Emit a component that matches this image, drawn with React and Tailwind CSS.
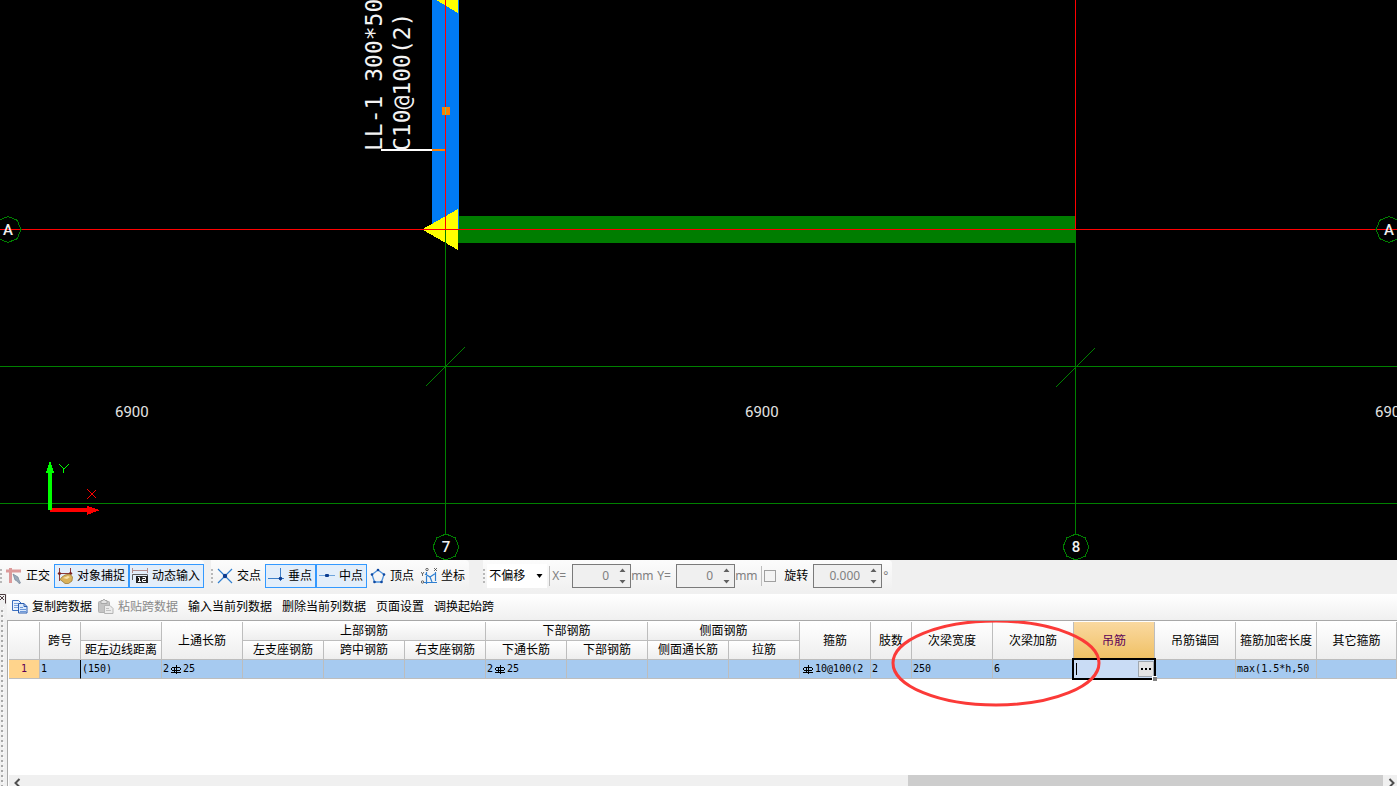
import React, { useState } from 'react'

const CopyIcon = () => (
  <svg width="16" height="16" viewBox="0 0 16 16" className="shrink-0">
    <path d="M0.5 1.5h6l3 3v7h-9z" fill="#e8f1fd" stroke="#3c6fc0" />
    <path d="M2 4.5h4M2 6.5h4M2 8.5h4" stroke="#7da4de" />
    <path d="M6.5 4.5h5.5l3 3v6.5h-8.5z" fill="#dbe9fc" stroke="#2a5db0" />
    <path d="M12 4.5v3h3" fill="none" stroke="#2a5db0" />
    <path d="M8 8.5h3M8 10.5h6M8 12.5h6" stroke="#6a96d8" />
  </svg>
)

const PasteIcon = () => (
  <svg width="16" height="16" viewBox="0 0 16 16" className="shrink-0">
    <rect x="0.5" y="2.5" width="11" height="11" rx="1" fill="#c4c4c4" stroke="#b0b0b0" />
    <path d="M3 1.5h2l1-1.5 1 1.5h2v3H3z" fill="#e4e4e4" stroke="#a8a8a8" />
    <path d="M6.5 6.5h5.5l3 3v5h-8.5z" fill="#ececec" stroke="#b4b4b4" />
    <path d="M8 9.5h3M8 11.5h5" stroke="#c0c0c0" />
  </svg>
)

const OrthoIcon = () => (
  <svg width="16" height="16" viewBox="0 0 16 16" className="shrink-0">
    <path d="M0 3h15M4.5 0v15" stroke="#dc9a9a" strokeWidth="3" />
    <path d="M7 6l5 3 1 3 1.500 3-1.500 0.500-2-2.500-2-1z" fill="#9aa8b8" stroke="#6c7c90" strokeWidth="0.600" />
  </svg>
)

const SnapIcon = () => (
  <svg width="16" height="16" viewBox="0 0 16 16" className="shrink-0">
    <path d="M2.5 0v13M13.5 0v7M1 5.5h14" stroke="#8c3a3a" />
    <path d="M0.5 5.5l2-2 2 2-2 2zM11.5 5.5l2-2 2 2-2 2z" fill="#7a2020" />
    <path d="M5 9l3-2 5-1 2.500 3-0.500 4-3.500 2.500H8l-3-2.500-2-1.500z" fill="#d9b25c" stroke="#94702a" strokeWidth="0.7" />
    <path d="M6 10l5-2 2 1-3 2z" fill="#f6e3ad" />
  </svg>
)

const DynamicIcon = () => (
  <svg width="16" height="16" viewBox="0 0 16 16" className="shrink-0">
    <path d="M0.5 0v5M15.5 0v5M1 2.5h14" stroke="#b08c8c" fill="none" />
    <path d="M0.5 12V6.5h15V9" fill="none" stroke="#5c5c5c" />
    <path d="M4 8h12v7H4z" fill="#222" />
    <path d="M6 9.500h1.500v4M6 13.500h3M10.500 9.500h3v2h-3v2h3.500" fill="none" stroke="#fff" />
  </svg>
)

const CrossIcon = () => (
  <svg width="16" height="16" viewBox="0 0 16 16" className="shrink-0">
    <path d="M1 1l14 14M15 1L1 15" stroke="#2f7fd0" strokeWidth="1.200" />
    <circle cx="8" cy="8" r="2.200" fill="#0c3c90" />
  </svg>
)

const PerpIcon = () => (
  <svg width="16" height="16" viewBox="0 0 16 16" className="shrink-0">
    <path d="M0 10.500h16M12.500 0v13" stroke="#3d7fc8" />
    <circle cx="12.500" cy="10.500" r="1.800" fill="#0c3c90" />
  </svg>
)

const MidIcon = () => (
  <svg width="16" height="16" viewBox="0 0 16 16" className="shrink-0">
    <path d="M0 7.500h16" stroke="#6ea4dc" />
    <rect x="6" y="6" width="4" height="3" rx="1" fill="#0c3c90" />
  </svg>
)

const VertexIcon = () => (
  <svg width="16" height="16" viewBox="0 0 16 16" className="shrink-0">
    <path d="M8 2l6 4.500-2.500 7.500h-7L2 6.500z" fill="none" stroke="#4f92dc" strokeWidth="1.300" />
    <g fill="#0f48a0">
      <circle cx="8" cy="2" r="1.300" />
      <circle cx="14" cy="6.500" r="1.300" />
      <circle cx="2" cy="6.500" r="1.300" />
      <circle cx="11.500" cy="14" r="1.300" />
      <circle cx="4.500" cy="14" r="1.300" />
    </g>
  </svg>
)

const CoordIcon = () => (
  <svg width="16" height="16" viewBox="0 0 16 16" className="shrink-0">
    <path d="M5.500 4v12M14.500 4v9M3 14.500h13M4 6l5 3 2 5M9 9l6-4" fill="none" stroke="#2f7fd0" strokeWidth="1.200" />
    <path d="M0 4l1.500 2L3 4M1.500 6v2M13 0l3 3M16 0l-3 3" fill="none" stroke="#444" strokeWidth="0.800" />
    <circle cx="6" cy="1.500" r="1.200" fill="none" stroke="#444" strokeWidth="0.800" />
    <circle cx="1.500" cy="14" r="1.200" fill="none" stroke="#444" strokeWidth="0.800" />
  </svg>
)

// HRB400 steel grade mark
const Rebar = () => (
  <svg width="12" height="11" viewBox="0 0 12 11" className="mx-px shrink-0" shapeRendering="crispEdges" role="img" aria-label="HRB400">
    <path d="M2 3.500h8M2 6.500h8M1.500 4v2M10.500 4v2M6.500 1v9M4.500 3v6M1 8.500h10" fill="none" stroke="#000" />
  </svg>
)

const Grip = () => (
  <svg width="2" height="14" viewBox="0 0 2 14" className="shrink-0" aria-hidden="true">
    <path d="M1 0v14" stroke="#b8b8b8" strokeWidth="2" strokeDasharray="2 2" />
  </svg>
)

const ToolButton = ({ icon, label, active }) => (
  <button
    type="button"
    aria-pressed={!!active}
    className={`flex h-6 shrink-0 items-center gap-1 border pr-[3px] pl-0.5 whitespace-nowrap ${
      active ? 'border-[#3399ff] bg-[#e3eefa]' : 'border-transparent'
    }`}
  >
    {icon}
    <span>{label}</span>
  </button>
)

const SpinBox = ({ id, value, onChange, wide, label }) => (
  <div className={`flex h-6 items-center border border-[#7a7a7a] bg-[#f0f0f0] pr-1 ${wide ? 'w-[69px]' : 'w-[59px]'}`}>
    <input
      id={id}
      aria-label={label}
      value={value}
      onChange={(e) => onChange(e.target.value)}
      className="w-0 flex-1 bg-transparent pr-2.5 text-right text-[#808080] outline-none"
    />
    <svg width="7" height="18" viewBox="0 0 7 18" className="shrink-0">
      <path d="M0.500 5h6L3.500 1.500zM0.500 13h6l-3 3.500z" fill="#606060" />
    </svg>
  </div>
)

const bubblePoints = (cx, cy) =>
  Array.from({ length: 8 }, (_, i) => {
    const a = (i * Math.PI) / 4
    return `${cx + 13 * Math.cos(a)},${cy + 13 * Math.sin(a)}`
  }).join(' ')

const Bubble = ({ cx, cy, name }) => (
  <g>
    <polygon points={bubblePoints(cx, cy)} fill="none" stroke="#008000" />
    <text x={cx} y={cy + 5} textAnchor="middle" fill="#f0f0f0" className="font-[Roboto,sans-serif] text-[15px] font-medium">
      {name}
    </text>
  </g>
)

const Drawing = () => (
  <svg width="100%" height="100%" className="block" role="img" aria-label="梁平面图">
    <g shapeRendering="crispEdges">
      <rect x="458" y="216" width="618" height="27" fill="#007d00" />
      <rect x="432" y="0" width="27" height="229" fill="#007bf5" />
      <polygon points="436,0 458,0 458,13" fill="#ffff00" />
      <polygon points="422,229.500 458,209 458,250" fill="#ffff00" />

      <path d="M445.500 230V534M1075.500 230V534" stroke="#008000" />
      <path d="M445.500 0V230M1075.500 0V230" stroke="#ff0000" />
      <line x1="0" x2="100%" y1="229.500" y2="229.500" stroke="#ff0000" />
      <line x1="0" x2="100%" y1="366.500" y2="366.500" stroke="#008000" />
      <line x1="0" x2="100%" y1="503.500" y2="503.500" stroke="#008000" />
      <path d="M426 386l39-39M1056 387l39-39" stroke="#008000" />

      <rect x="442" y="107" width="8" height="8" fill="#ff8000" />
      <path d="M445.500 107v8" stroke="#60d080" />
      <path d="M381 150h51" stroke="#fff" strokeWidth="2" />
      <path d="M432 150h13" stroke="#ff8000" strokeWidth="2" />

      <Bubble cx={8} cy={229.5} name="A" />
      <Bubble cx={1389} cy={229.5} name="A" />
      <Bubble cx={446} cy={547} name="7" />
      <Bubble cx={1076} cy={547} name="8" />

      {/* axes */}
      <rect x="50" y="508" width="40" height="4" fill="#ff0000" />
      <polygon points="87,506 100,510 87,515" fill="#ff0000" />
      <rect x="48" y="470" width="4" height="40" fill="#00ff00" />
      <polygon points="46,473 50,460 54,473" fill="#00ff00" />
      <path d="M59 464l5 5 5-5M63.500 469v4" fill="none" stroke="#00ff00" />
      <path d="M87 489l9 9M96 490l-9 9" stroke="#ff0000" />
    </g>

    <g fill="#f4f4f4" className="font-['DejaVu_Sans_Mono',monospace] text-[23px]">
      <text transform="translate(382 151) rotate(-90)">LL-1 300*50</text>
      <text transform="translate(410 151) rotate(-90)">C10@100(2)</text>
    </g>
    <g fill="#e4e4e4" className="font-[Roboto,sans-serif] text-[15px]">
      <text x="115" y="417">6900</text>
      <text x="745" y="417">6900</text>
      <text x="1375" y="417">6900</text>
    </g>
  </svg>
)

const SnapBar = () => {
  const [x, setX] = useState('0')
  const [y, setY] = useState('0')
  const [angle, setAngle] = useState('0.000')
  const [rotate, setRotate] = useState(false)

  return (
    <div className="flex h-[34px] shrink-0 items-start bg-[#f0f0f0]">
      <div className="flex h-[31px] items-center rounded-r bg-linear-to-b from-[#fcfcfc] to-[#f0f0f0]">
        <Grip />
        <div className="ml-px flex">
          <ToolButton icon={<OrthoIcon />} label="正交" />
          <ToolButton icon={<SnapIcon />} label="对象捕捉" active />
          <ToolButton icon={<DynamicIcon />} label="动态输入" active />
        </div>
      </div>
      <div className="ml-[7px] flex h-[31px] items-center rounded-r bg-linear-to-b from-[#fcfcfc] to-[#f0f0f0]">
        <Grip />
        <div className="ml-px flex">
          <ToolButton icon={<CrossIcon />} label="交点" />
          <ToolButton icon={<PerpIcon />} label="垂点" active />
          <ToolButton icon={<MidIcon />} label="中点" active />
          <ToolButton icon={<VertexIcon />} label="顶点" />
          <ToolButton icon={<CoordIcon />} label="坐标" />
        </div>
      </div>
      <div className="ml-3.5 flex h-[31px] items-center rounded-r bg-linear-to-b from-[#fcfcfc] to-[#f0f0f0] pr-1 text-[#808080]">
        <Grip />
        <div className="ml-0.5 flex h-6 w-[60px] items-center bg-white text-black">
          <select aria-label="偏移方式" className="h-6 w-12 appearance-none pl-0.5 outline-none">
            <option>不偏移</option>
          </select>
          <svg width="7" height="4" viewBox="0 0 7 4" className="ml-px shrink-0">
            <path d="M0.500 0h6l-3 4z" fill="#000" />
          </svg>
        </div>
        <span className="mx-0.5 h-5 w-px bg-[#bdbdbd]" />
        <label htmlFor="offset-x" className="w-5">X=</label>
        <SpinBox id="offset-x" value={x} onChange={setX} />
        <span className="w-[26px]">mm</span>
        <label htmlFor="offset-y" className="w-[19px]">Y=</label>
        <SpinBox id="offset-y" value={y} onChange={setY} />
        <span className="w-[26px]">mm</span>
        <span className="mr-0.5 h-5 w-px bg-[#bdbdbd]" />
        <input
          id="rotate"
          type="checkbox"
          checked={rotate}
          onChange={(e) => setRotate(e.target.checked)}
          className="h-3 w-3 appearance-none border border-[#a0a0a0] bg-[#f4f4f4] checked:bg-[#3399ff]"
        />
        <label htmlFor="rotate" className="ml-2 w-[29px] text-black">旋转</label>
        <SpinBox label="旋转角度" value={angle} onChange={setAngle} wide />
        <span className="ml-px">°</span>
      </div>
    </div>
  )
}

const SpanBar = () => (
  <div className="flex h-[26px] shrink-0 items-center gap-2.5 bg-linear-to-b from-white to-[#f0f0f0] pl-[5px] whitespace-nowrap">
    <div className="flex items-center gap-1.5">
      <button type="button" className="flex items-center gap-1"><CopyIcon />复制跨数据</button>
      <button type="button" disabled className="flex items-center gap-1 text-[#8a8a8a]"><PasteIcon />粘贴跨数据</button>
    </div>
    <button type="button">输入当前列数据</button>
    <button type="button">删除当前列数据</button>
    <button type="button">页面设置</button>
    <button type="button">调换起始跨</button>
  </div>
)

const th = 'border-r border-b border-[#bdbdbd] bg-linear-to-b from-white to-[#eeeeee] p-0 font-normal whitespace-nowrap'
const td = "border-r border-b border-[#bdbdbd] bg-[#a6caf0] p-0 pl-px font-['DejaVu_Sans_Mono',monospace] text-[10px] whitespace-nowrap overflow-hidden"

const SpanTable = () => (
  <table className="w-full min-w-[1388px] table-fixed border-separate border-spacing-0 text-center text-xs leading-4">
    <colgroup>
      <col className="w-[31px]" />
      <col className="w-[41px]" />
      <col className="w-[81px]" />
      <col className="w-[81px]" />
      <col className="w-[81px]" />
      <col className="w-[81px]" />
      <col className="w-[81px]" />
      <col className="w-[81px]" />
      <col className="w-[81px]" />
      <col className="w-[81px]" />
      <col className="w-[71px]" />
      <col className="w-[71px]" />
      <col className="w-[41px]" />
      <col className="w-[81px]" />
      <col className="w-[81px]" />
      <col className="w-[81px]" />
      <col className="w-[81px]" />
      <col className="w-[81px]" />
      <col />
    </colgroup>
    <thead>
      <tr className="h-[19px]">
        <th rowSpan={2} className={th} />
        <th rowSpan={2} className={th}>跨号</th>
        <th className={th} />
        <th rowSpan={2} className={th}>上通长筋</th>
        <th colSpan={3} className={th}>上部钢筋</th>
        <th colSpan={2} className={th}>下部钢筋</th>
        <th colSpan={2} className={th}>侧面钢筋</th>
        <th rowSpan={2} className={th}>箍筋</th>
        <th rowSpan={2} className={th}>肢数</th>
        <th rowSpan={2} className={th}>次梁宽度</th>
        <th rowSpan={2} className={th}>次梁加筋</th>
        <th rowSpan={2} className="border-r border-b border-[#bdbdbd] bg-linear-to-b from-[#fad9a0] to-[#efc062] p-0 font-normal text-[#5c0058]">吊筋</th>
        <th rowSpan={2} className={th}>吊筋锚固</th>
        <th rowSpan={2} className={th}>箍筋加密长度</th>
        <th rowSpan={2} className={th}>其它箍筋</th>
      </tr>
      <tr className="h-[19px]">
        <th className={th}>距左边线距离</th>
        <th className={th}>左支座钢筋</th>
        <th className={th}>跨中钢筋</th>
        <th className={th}>右支座钢筋</th>
        <th className={th}>下通长筋</th>
        <th className={th}>下部钢筋</th>
        <th className={th}>侧面通长筋</th>
        <th className={th}>拉筋</th>
      </tr>
    </thead>
    <tbody className="text-left">
      <tr className="h-[19px]">
        <th scope="row" className="border-r border-b border-[#bdbdbd] bg-[#ffd48c] p-0 text-center font-['DejaVu_Sans_Mono',monospace] text-[10px] font-normal text-[#5c0058]">1</th>
        <td className="border-r border-b border-r-black border-b-[#bdbdbd] bg-[#a6caf0] p-0 pl-px font-['DejaVu_Sans_Mono',monospace] text-[10px]">1</td>
        <td className={td}>(150)</td>
        <td className={td}><span className="flex items-center">2<Rebar />25</span></td>
        <td className={td} />
        <td className={td} />
        <td className={td} />
        <td className={td}><span className="flex items-center">2<Rebar />25</span></td>
        <td className={td} />
        <td className={td} />
        <td className={td} />
        <td className={td}><span className="flex items-center"><Rebar />10@100(2</span></td>
        <td className={td}>2</td>
        <td className={td}>250</td>
        <td className={td}>6</td>
        <td className="relative border-r border-b border-[#bdbdbd] bg-[#c9dcf5] p-0">
          <div className="absolute -top-0.5 -right-0.5 -bottom-0.5 -left-0.5 flex items-center border-2 border-black bg-[#c9dcf5]">
            <input aria-label="吊筋" className="ml-0.5 h-3 w-0 flex-1 border-l border-black bg-transparent pl-0.5 text-[10px] outline-none" />
            <button type="button" aria-label="更多" className="flex h-4 w-4 items-center justify-center border border-[#a0a8b0] bg-[#e4e4e4]">
              <svg width="10" height="2" viewBox="0 0 10 2"><path d="M0 0h2v2H0zM4 0h2v2H4zM8 0h2v2H8z" /></svg>
            </button>
            <span className="absolute -right-[3px] -bottom-[3px] h-[5px] w-[5px] border-t border-l border-white bg-[#808080]" />
          </div>
        </td>
        <td className={td} />
        <td className={td}>max(1.5*h,50</td>
        <td className={td} />
      </tr>
    </tbody>
  </table>
)

const App = () => {
  return (
    <div className="flex h-screen flex-col overflow-hidden bg-[#f0f0f0] font-['Noto_Sans','Noto_Sans_CJK_SC',sans-serif] text-xs leading-4 text-black">
      <main className="min-h-0 flex-1 overflow-hidden bg-black">
        <Drawing />
      </main>

      <SnapBar />

      <section className="flex h-48 shrink-0">
        <div className="w-[7px] shrink-0 overflow-hidden">
          <svg width="7" height="192" aria-hidden="true">
            <defs>
              <pattern id="dots" width="5" height="5" patternUnits="userSpaceOnUse">
                <rect x="1" y="1" width="2" height="2" fill="#a8a8a8" />
                <rect x="3" y="3" width="1" height="1" fill="#fff" />
              </pattern>
            </defs>
            <rect y="13" width="5" height="179" fill="url(#dots)" />
            <path d="M0 0.500h5.500v9M0 2l4 4M4 2L0 6" fill="none" stroke="#4c3c40" />
          </svg>
        </div>
        <div className="flex min-w-0 flex-1 flex-col">
          <SpanBar />
          <div className="relative flex min-h-0 flex-1 flex-col overflow-hidden border-t border-l border-[#a8a8a8] bg-white pt-px pl-px">
            <SpanTable />
            {/* hand-drawn mark round the secondary beam columns */}
            <svg width="210" height="90" viewBox="0 0 210 90" className="pointer-events-none absolute -top-0.5 left-[883px]" aria-hidden="true">
              <ellipse cx="105" cy="44" rx="103" ry="42" fill="none" stroke="#fb3a38" strokeWidth="3" />
            </svg>
            <div className="mt-auto h-[11px] overflow-hidden bg-[#f0f0f0]">
              <div className="flex h-[17px] items-center">
                <svg width="17" height="17" viewBox="0 0 17 17" className="shrink-0">
                  <path d="M10.500 4l-4 4 4 4" fill="none" stroke="#505050" strokeWidth="2" />
                </svg>
                <div className="flex h-full flex-1 justify-end">
                  <div className="h-full w-[35%] bg-[#cdcdcd]" />
                </div>
                <svg width="14" height="17" viewBox="0 0 14 17" className="shrink-0">
                  <path d="M6.500 4l4 4-4 4" fill="none" stroke="#505050" strokeWidth="2" />
                </svg>
              </div>
            </div>
          </div>
        </div>
      </section>
    </div>
  )
}

export default App
